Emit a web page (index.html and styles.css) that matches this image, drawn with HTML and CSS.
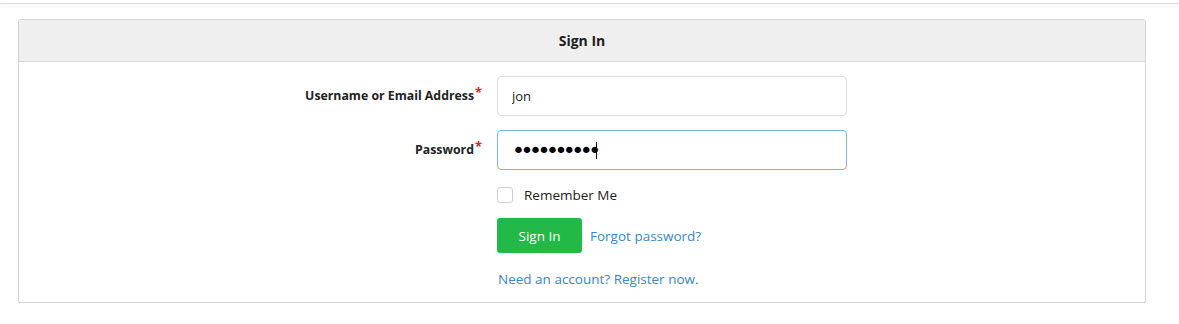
FILE: index.html
```html
<!DOCTYPE html>
<html lang="en">
<head>
<meta charset="utf-8">
<title>Sign In</title>
<link rel="stylesheet" href="styles.css">
</head>
<body>
<div class="topbar"></div>
<main class="page">
  <section class="panel">
    <header class="panel-heading">Sign In</header>
    <form class="panel-body">
      <div class="form-row">
        <label class="form-label" for="user">Username or Email Address<span class="req">*</span></label>
        <input class="form-input" id="user" type="text" value="jon">
      </div>
      <div class="form-row">
        <label class="form-label" for="pass">Password<span class="req">*</span></label>
        <div class="field-wrap">
          <input class="form-input focused" id="pass" type="password" value="passwordxx">
          <span class="caret"></span>
        </div>
      </div>
      <div class="form-row">
        <span></span>
        <label class="check"><span class="checkbox"></span>Remember Me</label>
      </div>
      <div class="form-row actions-row">
        <span></span>
        <div class="actions">
          <button type="button" class="btn">Sign In</button>
          <a href="#" class="link">Forgot password?</a>
        </div>
      </div>
      <div class="form-row register-row">
        <span></span>
        <a href="#" class="link">Need an account? Register now.</a>
      </div>
    </form>
  </section>
</main>
</body>
</html>
```
FILE: styles.css
```css
html, body {
  margin: 0;
  padding: 0;
  background: #fff;
  font-family: "Open Sans", "Noto Sans", sans-serif;
  font-size: 13px;
  color: #222;
}
.topbar {
  height: 3px;
  border-bottom: 1px solid #dcdcdc;
  box-shadow: 0 2px 4px rgba(0,0,0,0.04);
}
.page {
  padding: 15px 33px 0 18px;
}
.panel {
  border: 1px solid #d4d4d4;
  border-radius: 3px 3px 0 0;
  height: 284px;
  box-sizing: border-box;
}
.panel-heading {
  height: 41px;
  background: #efefef;
  border-bottom: 1px solid #d4d4d4;
  border-radius: 2px 2px 0 0;
  display: flex;
  align-items: center;
  justify-content: center;
  font-weight: 700;
  font-size: 14px;
  color: #1e1e1e;
}
.panel-body {
  margin: 0;
  padding: 14px 0 0;
  display: grid;
  grid-template-columns: 463px 350px;
  column-gap: 15px;
  row-gap: 14px;
}
.form-row {
  display: contents;
}
.form-label {
  text-align: right;
  font-weight: 700;
  font-size: 12.3px;
  color: #222;
  align-self: center;
  padding-right: 8px;
  position: relative;
  top: -1px;
}
.req {
  color: #d9262b;
  position: absolute;
  right: 0;
  top: -4px;
  font-size: 13px;
}
.form-input {
  box-sizing: border-box;
  width: 350px;
  height: 40px;
  border: 1px solid #dcdcdc;
  border-radius: 4px;
  padding: 0 14px;
  font-family: inherit;
  font-size: 13px;
  color: #222;
  outline: none;
  background: #fff;
}
.form-input.focused {
  border-color: #7fb2dc;
  font-size: 22px;
  letter-spacing: -4.5px;
  font-family: "DejaVu Sans", sans-serif;
  color: #000;
}
.field-wrap {
  position: relative;
  width: 350px;
}
.caret {
  position: absolute;
  left: 99px;
  top: 12px;
  width: 1px;
  height: 17px;
  background: #000;
}
.check {
  display: flex;
  align-items: center;
  gap: 11px;
  height: 18px;
  margin-top: 2px;
  font-size: 13.5px;
  color: #222;
}
.checkbox {
  width: 14px;
  height: 14px;
  border: 1px solid #cfcfcf;
  border-radius: 3px;
  background: #fff;
}
.actions {
  display: flex;
  align-items: center;
  gap: 8px;
}
.btn {
  width: 85px;
  height: 35px;
  border: none;
  border-radius: 3px;
  background: #22b947;
  color: #fff;
  font-family: inherit;
  font-size: 13.5px;
  cursor: pointer;
}
.link {
  color: #3a85c6;
  text-decoration: none;
  font-size: 13.5px;
}
.register-row .link {
  margin-top: 3px;
  padding-left: 1px;
}
```
